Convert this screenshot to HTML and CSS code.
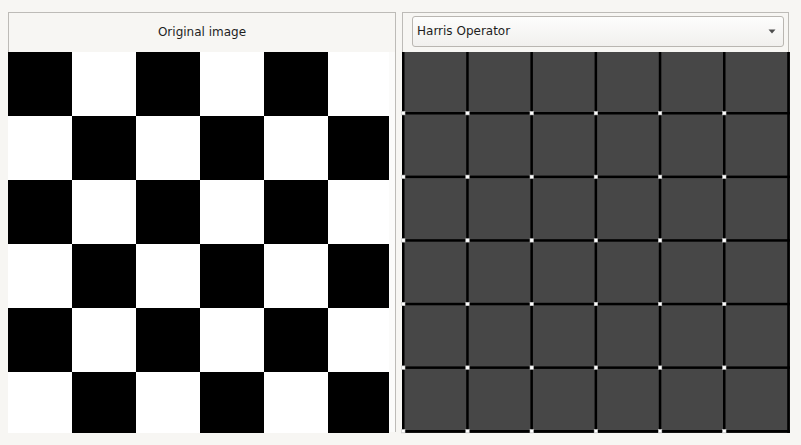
FILE: index.html
```html
<!DOCTYPE html>
<html>
<head>
<meta charset="utf-8">
<link rel="stylesheet" href="styles.css">
</head>
<body>
<div class="app">
  <div class="panel panel-left">
    <div class="header">Original image</div>
    <div class="body">
      <div class="checker"></div>
      <div class="filler"></div>
    </div>
  </div>
  <div class="panel panel-right">
    <div class="header header-combo">
      <div class="combo">
        <span class="combo-text">Harris Operator</span>
        <svg class="combo-arrow" width="8" height="5" viewBox="0 0 8 5"><path d="M0.5 0.5 H7.5 L4 4.5 Z" fill="#4d4d4d"/></svg>
      </div>
    </div>
    <svg class="harris" width="388" height="381" viewBox="0 0 388 381">
      <rect x="0" y="0" width="388" height="381" fill="#474747"/>
      <g fill="#000">
        <rect x="0" y="0" width="2.5" height="381"/>
        <rect x="64.2" y="0" width="2.5" height="381"/>
        <rect x="128.4" y="0" width="2.5" height="381"/>
        <rect x="192.6" y="0" width="2.5" height="381"/>
        <rect x="256.8" y="0" width="2.5" height="381"/>
        <rect x="321" y="0" width="2.5" height="381"/>
        <rect x="385.2" y="0" width="2.6" height="381"/>
        <rect x="0" y="60" width="388" height="2.5"/>
        <rect x="0" y="123.6" width="388" height="2.5"/>
        <rect x="0" y="187.2" width="388" height="2.5"/>
        <rect x="0" y="250.8" width="388" height="2.5"/>
        <rect x="0" y="314.4" width="388" height="2.5"/>
        <rect x="0" y="378" width="388" height="2.7"/>
      </g>
      <defs><rect id="dot" width="3.4" height="3.4" fill="#ffffff" stroke="#c8c8c8" stroke-width="0.6"/></defs>
      <g>
        <use href="#dot" x="-0.4" y="59.5"/><use href="#dot" x="63.8" y="59.5"/><use href="#dot" x="128" y="59.5"/><use href="#dot" x="192.2" y="59.5"/><use href="#dot" x="256.4" y="59.5"/><use href="#dot" x="320.6" y="59.5"/>
        <use href="#dot" x="-0.4" y="123.1"/><use href="#dot" x="63.8" y="123.1"/><use href="#dot" x="128" y="123.1"/><use href="#dot" x="192.2" y="123.1"/><use href="#dot" x="256.4" y="123.1"/><use href="#dot" x="320.6" y="123.1"/>
        <use href="#dot" x="-0.4" y="186.7"/><use href="#dot" x="63.8" y="186.7"/><use href="#dot" x="128" y="186.7"/><use href="#dot" x="192.2" y="186.7"/><use href="#dot" x="256.4" y="186.7"/><use href="#dot" x="320.6" y="186.7"/>
        <use href="#dot" x="-0.4" y="250.3"/><use href="#dot" x="63.8" y="250.3"/><use href="#dot" x="128" y="250.3"/><use href="#dot" x="192.2" y="250.3"/><use href="#dot" x="256.4" y="250.3"/><use href="#dot" x="320.6" y="250.3"/>
        <use href="#dot" x="-0.4" y="313.9"/><use href="#dot" x="63.8" y="313.9"/><use href="#dot" x="128" y="313.9"/><use href="#dot" x="192.2" y="313.9"/><use href="#dot" x="256.4" y="313.9"/><use href="#dot" x="320.6" y="313.9"/>
        <use href="#dot" x="-0.4" y="377.5"/><use href="#dot" x="63.8" y="377.5"/><use href="#dot" x="128" y="377.5"/><use href="#dot" x="192.2" y="377.5"/><use href="#dot" x="256.4" y="377.5"/><use href="#dot" x="320.6" y="377.5"/>
      </g>
    </svg>
  </div>
</div>
</body>
</html>
```

FILE: styles.css
```css
html, body {
  margin: 0;
  padding: 0;
  background: #f7f6f3;
  width: 801px;
  height: 445px;
  overflow: hidden;
}

.app {
  display: flex;
  gap: 6px;
  padding: 12px 0 0 8px;
  font-family: "DejaVu Sans", sans-serif;
  font-size: 12px;
  color: #1e1e1e;
}

.panel {
  display: flex;
  flex-direction: column;
}

.panel-left {
  width: 388px;
}

.panel-right {
  width: 387px;
}

.header {
  box-sizing: border-box;
  height: 40px;
  border: 1px solid #bdbbb7;
  border-bottom: none;
  display: flex;
  align-items: center;
  justify-content: center;
  padding-bottom: 2px;
}

.header-combo {
  justify-content: stretch;
  align-items: flex-start;
  padding: 3px 4px 0 9px;
}

.combo {
  box-sizing: border-box;
  flex: 1;
  height: 31px;
  border: 1px solid #b9b6b1;
  border-radius: 3px;
  background: linear-gradient(#fdfdfc, #f1f0ee);
  display: flex;
  align-items: center;
  justify-content: space-between;
  padding: 0 7px 0 4px;
}

.combo-text {
  padding-bottom: 1px;
}

.combo-arrow {
  display: block;
}

.body {
  display: flex;
}

.checker {
  width: 381px;
  height: 381px;
  background: conic-gradient(#fff 0 25%, #000 0 50%, #fff 0 75%, #000 0) 0 0 / 128px 128px;
}

.filler {
  box-sizing: border-box;
  width: 7px;
  height: 380px;
  background: #fbfbfa;
  border-right: 1px solid #bdbbb7;
}

.harris {
  display: block;
  overflow: visible;
}
```
